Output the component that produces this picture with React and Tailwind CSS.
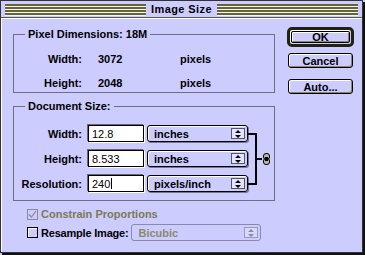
import React from "react";

const Stripes = () => (
  <div className="flex-1 flex flex-col gap-[1px]">
    {[0, 1, 2, 3].map((i) => (
      <div key={i} className="h-[2px] bg-[#666633] shadow-[0_1px_0_#f4f4ff]" />
    ))}
  </div>
);

const Arrows = ({ disabled }) => (
  <div
    className={`ml-auto mr-[2px] w-[14px] h-[11px] flex items-center justify-center border ${
      disabled ? "border-[#9a9ab8] bg-[#d8d8ff]" : "border-[#555566] bg-[#e4e4ff]"
    }`}
  >
    <svg width="6" height="8" viewBox="0 0 6 8">
      <path d="M3 0 L6 3 L0 3 Z M0 5 L6 5 L3 8 Z" fill={disabled ? "#8a8aa8" : "#000"} />
    </svg>
  </div>
);

const Popup = ({ label, className = "", disabled = false }) => (
  <div
    className={`h-[17px] flex items-center rounded-[3px] border pl-[6px] ${
      disabled
        ? "border-[#8a8aa8] text-[#8a8a6a]"
        : "border-black shadow-[inset_1px_1px_0_#fff,1px_1px_0_#777788]"
    } ${className}`}
  >
    <span>{label}</span>
    <Arrows disabled={disabled} />
  </div>
);

const Field = ({ value, cursor = false }) => (
  <div className="w-[56px] h-[17px] bg-white border border-black shadow-[-1px_-1px_0_#666677,1px_1px_0_#fff] flex items-center pl-[3px] font-normal">
    <span>{value}</span>
    {cursor && <span className="w-[1px] h-[11px] bg-black ml-[1px]" />}
  </div>
);

const Button = ({ label, primary = false }) =>
  primary ? (
    <div className="h-[20px] rounded-[5px] border-[3px] border-[#222211] p-[1px] bg-[#ccccff] shadow-[inset_1px_1px_0_#fff]">
      <div className="h-full rounded-[2px] border border-black flex items-center justify-center shadow-[inset_1px_1px_0_#fff,inset_-1px_-1px_0_#888866]">
        {label}
      </div>
    </div>
  ) : (
    <div className="mx-[1px] h-[15px] rounded-[3px] border border-black flex items-center justify-center shadow-[inset_1px_1px_0_#fff,inset_-1px_-1px_0_#888866]">
      {label}
    </div>
  );

const Lock = () => (
  <svg width="7" height="12" viewBox="0 0 7 12">
    <rect x="0.5" y="0.5" width="6" height="6" rx="2.5" fill="#b8b8a0" stroke="#000" />
    <rect x="0.5" y="5.5" width="6" height="6" rx="2.5" fill="#b8b8a0" stroke="#000" />
    <rect x="2" y="4" width="3" height="4" fill="#000" />
  </svg>
);

export default function App() {
  return (
    <div className="w-[365px] h-[255px] bg-[#ccccff] text-black text-[11px] leading-[12px] font-bold font-['Liberation_Sans',Arial,sans-serif]">
      <div className="w-[363px] h-[253px] border border-[#333333] shadow-[2px_2px_0_#111] flex flex-col">
        <div className="h-[17px] flex items-center gap-[5px] px-[4px] border-b border-[#555566]">
          <Stripes />
          <span className="text-[11px] tracking-[0.4px]">Image Size</span>
          <Stripes />
        </div>

        <div className="flex-1 flex border-l border-t border-white">
          <div className="w-[274px] pl-[11px] pt-[9px] flex flex-col">
            <fieldset className="w-[262px] border border-[#6e6e80]">
              <legend className="ml-[11px] px-[3px]">Pixel Dimensions: 18M</legend>
              <div className="grid grid-cols-[68px_66px_1fr] gap-x-[16px] gap-y-[12px] pt-[13px] pb-[3px]">
                <span className="text-right">Width:</span>
                <span>3072</span>
                <span>pixels</span>
                <span className="text-right">Height:</span>
                <span>2048</span>
                <span>pixels</span>
              </div>
            </fieldset>

            <fieldset className="mt-[7px] w-[262px] border border-[#6e6e80]">
              <legend className="ml-[11px] px-[3px]">Document Size:</legend>
              <div className="flex items-center pt-[13px] pb-[8px]">
                <div className="flex flex-col gap-[8px]">
                  {[
                    ["Width:", "12.8", "inches"],
                    ["Height:", "8.533", "inches"],
                    ["Resolution:", "240", "pixels/inch"],
                  ].map(([l, v, u]) => (
                    <div key={l} className="flex items-center">
                      <span className="w-[68px] text-right">{l}</span>
                      <div className="ml-[6px]">
                        <Field value={v} cursor={l === "Resolution:"} />
                      </div>
                      <Popup label={u} className="ml-[3px] w-[101px]" />
                    </div>
                  ))}
                </div>
                <div className="h-[52px] w-[9px] border-y-2 border-r-2 border-black" />
                <div className="w-[5px] h-[2px] bg-black" />
                <div className="ml-[1px]">
                  <Lock />
                </div>
              </div>
            </fieldset>

            <div className="mt-[7px] pl-[14px] flex flex-col gap-[4px]">
              <div className="flex items-center gap-[3px] text-[#7a7a55]">
                <div className="w-[11px] h-[11px] border border-[#8a8a9a] flex items-center justify-center">
                  <svg width="9" height="9" viewBox="0 0 9 9">
                    <path d="M1 4.5 L3.5 7 L8 1" stroke="#8a8a9a" strokeWidth="1.2" fill="none" />
                  </svg>
                </div>
                <span>Constrain Proportions</span>
              </div>
              <div className="flex items-center gap-[3px]">
                <div className="w-[11px] h-[11px] border border-black shadow-[inset_1px_1px_0_#fff]" />
                <span className="tracking-[-0.2px]">Resample Image:</span>
                <Popup label="Bicubic" disabled className="w-[130px]" />
              </div>
            </div>
          </div>

          <div className="w-[67px] ml-[11px] pt-[8px] flex flex-col">
            <Button label="OK" primary />
            <div className="mt-[6px]">
              <Button label="Cancel" />
            </div>
            <div className="mt-[11px]">
              <Button label="Auto..." />
            </div>
          </div>
        </div>
      </div>
    </div>
  );
}
